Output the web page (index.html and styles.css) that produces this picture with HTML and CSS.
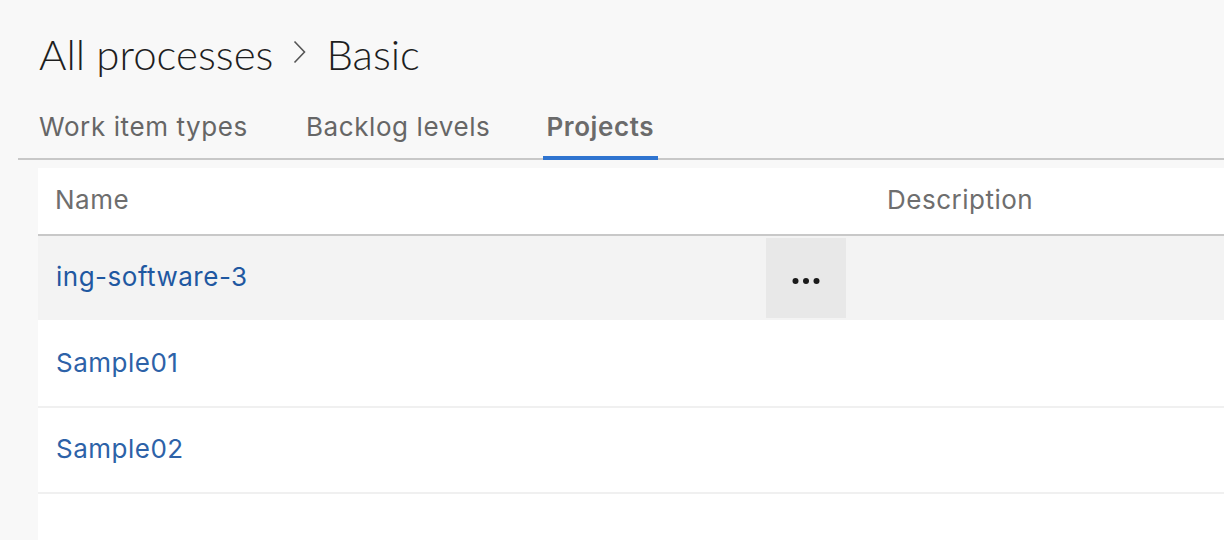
FILE: index.html
```html
<!DOCTYPE html>
<html lang="en">
<head>
<meta charset="utf-8">
<title>Basic - Projects</title>
<link rel="stylesheet" href="styles.css">
</head>
<body>
<div class="page">
  <header class="title">
    <span class="crumb">All processes</span>
    <svg class="chevron" width="13" height="24" viewBox="0 0 13 24" aria-hidden="true"><path d="M1.5 1.5 L11.5 12 L1.5 22.5" fill="none" stroke="#555" stroke-width="1.6"/></svg>
    <span class="crumb">Basic</span>
  </header>
  <nav class="tabs">
    <a class="tab">Work item types</a>
    <a class="tab">Backlog levels</a>
    <a class="tab active">Projects</a>
  </nav>
  <section class="card">
    <div class="row head">
      <div class="cell">Name</div>
      <div class="cell">Description</div>
    </div>
    <div class="row item hover">
      <div class="cell name"><a class="link">ing-software-3</a><button class="more" aria-label="More actions"><svg width="28" height="8" viewBox="0 0 28 8"><circle cx="3.5" cy="4" r="3"/><circle cx="14" cy="4" r="3"/><circle cx="24.5" cy="4" r="3"/></svg></button></div>
      <div class="cell"></div>
    </div>
    <div class="row item">
      <div class="cell name"><a class="link">Sample01</a></div>
      <div class="cell"></div>
    </div>
    <div class="row item">
      <div class="cell name"><a class="link">Sample02</a></div>
      <div class="cell"></div>
    </div>
  </section>
</div>
</body>
</html>
```
FILE: styles.css
```css
html, body {
  margin: 0;
  padding: 0;
  background: #f8f8f8;
  font-family: Inter, "Noto Sans", sans-serif;
  overflow: hidden;
}
.page {
  display: flex;
  flex-direction: column;
  padding-left: 18px;
  height: 540px;
  box-sizing: border-box;
}
.title {
  display: flex;
  align-items: center;
  padding: 29px 0 0 21px;
  height: 50px;
  flex: none;
  font-family: Lato, Roboto, "Liberation Sans", sans-serif;
  font-size: 42px;
  font-weight: 300;
  line-height: 50px;
  color: #1e1e1e;
}
.chevron {
  margin: 0 20px 0 20px;
  position: relative;
  top: -2px;
}
.tabs {
  display: flex;
  flex: none;
  margin-top: 30px;
  padding-left: 16px;
  border-bottom: 2px solid #c8c8c8;
}
.tab {
  position: relative;
  padding: 0 5px 13px;
  margin-right: 48px;
  font-size: 26px;
  line-height: 36px;
  letter-spacing: 0.6px;
  color: #666;
}
.tab.active {
  font-weight: 600;
  color: #6b6b6b;
  padding: 0 4px 13px 3px;
}
.tab.active::after {
  content: "";
  position: absolute;
  left: 0;
  right: 0;
  bottom: -2px;
  height: 4px;
  background: #2f74d0;
}
.card {
  flex: 1;
  margin: 8px 0 0 20px;
  background: #fff;
}
.row {
  display: grid;
  grid-template-columns: 832px 1fr;
}
.cell {
  display: flex;
  align-items: center;
  padding-left: 17px;
  padding-bottom: 3px;
  font-size: 26px;
  letter-spacing: 0.5px;
}
.head {
  height: 66px;
  border-bottom: 2px solid #c8c8c8;
  color: #6e6e6e;
}
.item {
  height: 84px;
  border-bottom: 2px solid #f0f0f0;
}
.item.hover {
  background: #f3f3f3;
  border-bottom-color: #fff;
}
.link {
  color: #2d62a8;
}
.hover .link {
  color: #1f58a1;
}
.name {
  justify-content: space-between;
  padding-bottom: 0;
}
.name .link {
  margin-left: 1px;
  padding-bottom: 3px;
}
.more {
  width: 80px;
  height: 80px;
  margin-right: 24px;
  border: 0;
  padding: 0;
  background: #e8e8e8;
  display: flex;
  align-items: center;
  justify-content: center;
}
.more svg {
  fill: #1a1a1a;
  position: relative;
  top: 3px;
}
```
